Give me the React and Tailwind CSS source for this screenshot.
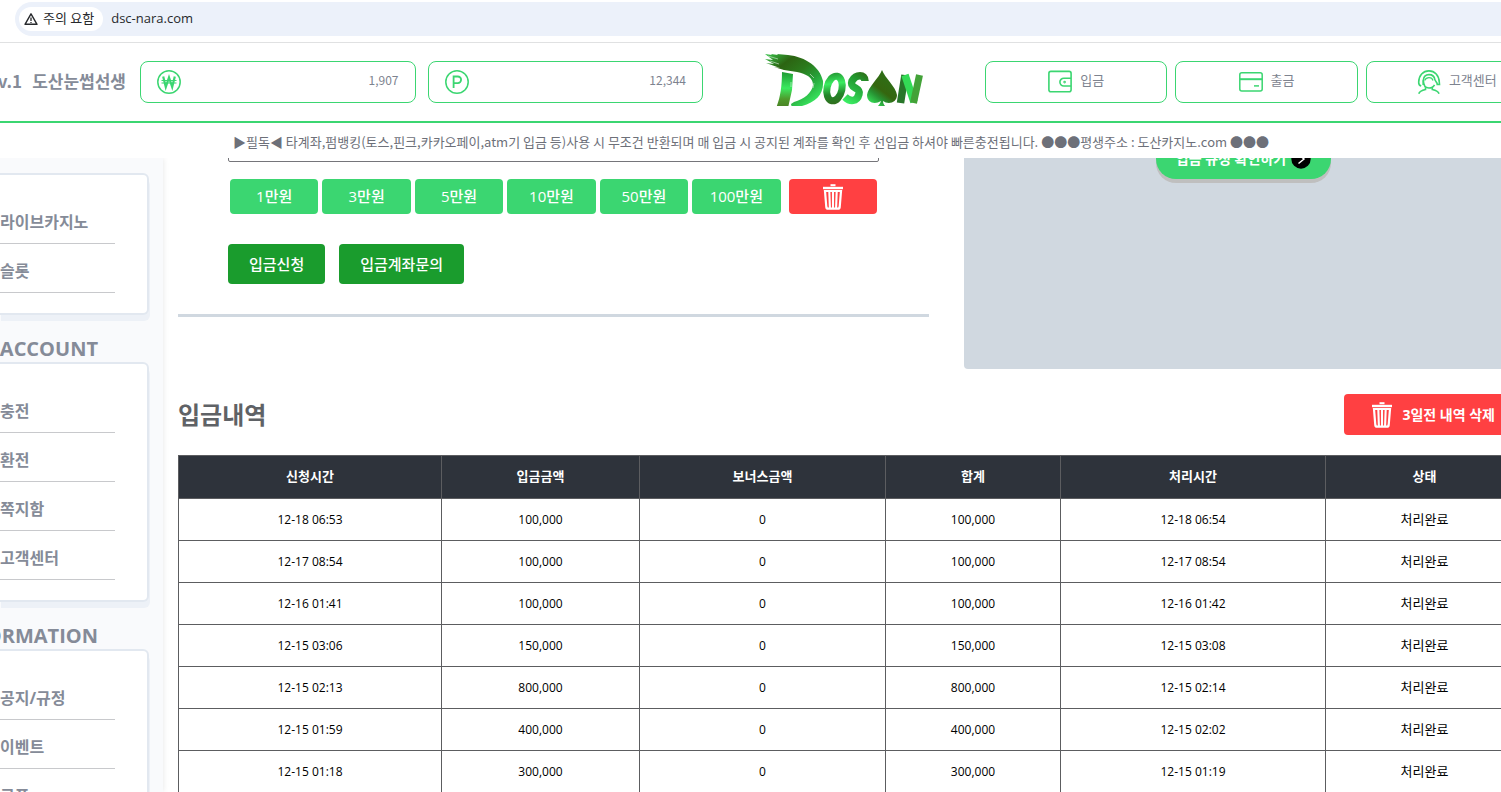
import React from 'react';

const FONT_UI = "font-['Open_Sans','Noto_Sans_CJK_KR',sans-serif]";
const FONT_KR = "font-['Noto_Sans_CJK_KR',sans-serif]";

const MENU_GROUPS = [
    { title: null, items: ['라이브카지노', '슬롯'] },
    { title: 'ACCOUNT', items: ['충전', '환전', '쪽지함', '고객센터'] },
    { title: 'ORMATION', items: ['공지/규정', '이벤트', '쿠폰'] },
];

const AMOUNTS = ['1만원', '3만원', '5만원', '10만원', '50만원', '100만원'];

const COLUMNS = [
    { label: '신청시간', width: 'w-[263px]' },
    { label: '입금금액', width: 'w-[198px]' },
    { label: '보너스금액', width: 'w-[246px]' },
    { label: '합계', width: 'w-[175px]' },
    { label: '처리시간', width: 'w-[265px]' },
    { label: '상태', width: 'w-[198px]' },
];

const DEPOSITS = [
    { requested: '12-18 06:53', amount: '100,000', processed: '12-18 06:54' },
    { requested: '12-17 08:54', amount: '100,000', processed: '12-17 08:54' },
    { requested: '12-16 01:41', amount: '100,000', processed: '12-16 01:42' },
    { requested: '12-15 03:06', amount: '150,000', processed: '12-15 03:08' },
    { requested: '12-15 02:13', amount: '800,000', processed: '12-15 02:14' },
    { requested: '12-15 01:59', amount: '400,000', processed: '12-15 02:02' },
    { requested: '12-15 01:18', amount: '300,000', processed: '12-15 01:19' },
];

const WarningIcon = () => (
    <svg width="14" height="14" viewBox="0 0 14 14" fill="none" stroke="#27292c" aria-hidden="true">
        <path d="M7 1.8 13 12.3H1Z" strokeWidth="1.4" strokeLinejoin="round" />
        <path d="M7 5.5v3.4M7 9.9v1.2" strokeWidth="1.3" />
    </svg>
);

const WonIcon = () => (
    <svg width="24" height="24" viewBox="0 0 24 24" fill="none" stroke="#3bd671" aria-hidden="true">
        <circle cx="12" cy="12" r="11.2" strokeWidth="1.5" />
        <path d="M6.2 6.5 8.8 17 12 7.5 15.2 17 17.8 6.5" strokeWidth="2.2" />
        <path d="M4.5 10.5h15M4.5 13h15" strokeWidth="1.2" />
    </svg>
);

const PointIcon = () => (
    <svg width="24" height="24" viewBox="0 0 24 24" fill="none" stroke="#3bd671" aria-hidden="true">
        <circle cx="12" cy="12" r="11.2" strokeWidth="1.5" />
        <path d="M8.6 18V6.5h4.2a3.3 3.3 0 0 1 0 6.6H8.6" strokeWidth="1.8" />
    </svg>
);

const WalletIcon = () => (
    <svg width="24" height="24" viewBox="0 0 24 24" fill="none" stroke="#3bd671" strokeWidth="1.6" aria-hidden="true">
        <rect x="0.9" y="1.4" width="22.2" height="20.4" rx="2" />
        <path d="M23 8.2h-7.2a3.9 3.9 0 0 0 0 7.8H23" />
        <circle cx="16.6" cy="12.1" r="0.5" />
    </svg>
);

const CardIcon = () => (
    <svg width="24" height="24" viewBox="0 0 24 24" fill="none" stroke="#3bd671" strokeWidth="1.5" aria-hidden="true">
        <rect x="0.8" y="2.8" width="22.4" height="18.2" rx="2" />
        <path d="M1 9.2h22" strokeWidth="2" />
        <path d="M15 15.9h5" />
    </svg>
);

const SupportIcon = () => (
    <svg width="24" height="24" viewBox="0 0 24 24" fill="none" stroke="#3bd671" strokeWidth="1.6" aria-hidden="true">
        <path d="M4.2 16C2.4 15.4 1.6 13.8 1.7 12.2 1.8 5.5 6 .9 11.9.9S22 5.5 22.3 12.2L22.5 14.5H19.5" />
        <path d="M6.2 15V10.5C6.5 6.8 8.8 4.6 12 4.6S17.5 6.8 17.9 9.8L20.5 14" />
        <path d="M7.6 10.5C8.5 8.5 10 7.6 12 7.6S15.500 8.500 16 10.500" strokeWidth="1.2" />
        <path d="M6.4 10.500C6.400 15 8.500 18 12 18 14.500 18 16.500 16.800 17.500 14.800" />
        <path d="M8.500 17.300V19.500C4.500 20.400 2.500 21 1.800 23.700M15.300 17.300V19.500C19.300 20.400 21.300 21 22 23.700" />
    </svg>
);

const TrashIcon = () => (
    <svg width="20" height="26" viewBox="0 0 20 26" fill="none" stroke="#fff" aria-hidden="true">
        <path d="M7.5 1.2h5" strokeWidth="2" />
        <path d="M0 4h20" strokeWidth="2.4" />
        <path d="M2 7h16l-1.300 16q-.2 1.700-1.800 1.700H5.100q-1.600 0-1.800-1.700Z" strokeWidth="2.200" />
        <path d="M6.300 7l.6 17M10 7v17M13.700 7l-.6 17" strokeWidth="2.100" />
    </svg>
);

const ArrowIcon = () => (
    <svg width="20" height="20" viewBox="0 0 20 20" fill="none" aria-hidden="true">
        <circle cx="10" cy="10" r="9.7" fill="#000" />
        <path d="M7.5 5.5 13 10l-5.500 4.500" stroke="#fff" strokeWidth="1.5" />
    </svg>
);

const Logo = () => (
    <svg width="160" height="52" viewBox="0 0 160 52" fill="none" role="img" aria-label="DOSAN">
        <defs>
            <linearGradient id="brush" gradientUnits="userSpaceOnUse" x1="0" y1="0" x2="44" y2="56">
                <stop offset="0" stopColor="#37c94c" />
                <stop offset=".28" stopColor="#2c6412" />
                <stop offset=".5" stopColor="#2b7a1c" />
                <stop offset=".7" stopColor="#25a038" />
                <stop offset="1" stopColor="#3cf065" />
            </linearGradient>
            <linearGradient id="stem" x1="0" y1="0" x2="0" y2="1">
                <stop offset="0" stopColor="#1f9a33" />
                <stop offset=".45" stopColor="#3bea60" />
                <stop offset=".75" stopColor="#4f9a2c" />
                <stop offset="1" stopColor="#4a7f24" />
            </linearGradient>
            <linearGradient id="ring" gradientUnits="userSpaceOnUse" x1="64" y1="18" x2="76" y2="52">
                <stop offset="0" stopColor="#218a2c" />
                <stop offset=".35" stopColor="#3aec60" />
                <stop offset=".65" stopColor="#23852a" />
                <stop offset="1" stopColor="#34691a" />
            </linearGradient>
            <linearGradient id="curl" gradientUnits="userSpaceOnUse" x1="102" y1="18" x2="82" y2="50">
                <stop offset="0" stopColor="#2f6c16" />
                <stop offset=".3" stopColor="#219a30" />
                <stop offset=".6" stopColor="#2cb945" />
                <stop offset="1" stopColor="#3df568" />
            </linearGradient>
            <linearGradient id="spade" gradientUnits="userSpaceOnUse" x1="106" y1="50" x2="128" y2="22">
                <stop offset="0" stopColor="#38e65b" />
                <stop offset=".3" stopColor="#279232" />
                <stop offset=".5" stopColor="#35660f" />
                <stop offset="1" stopColor="#2d7018" />
            </linearGradient>
        </defs>
        {/* Brush stroke of the first letter */}
        <path
            fill="url(#brush)"
            d="M1 0 8 1 7 0 14 1 13 0 24 1C42 3 56 13 59 27 60 40 52 48 38 52L28 54 27 50 30 48C40 45 48 39 49 31 49 23 42 20 33 18L20 16 10 13 16 14 2 9 10 10 1 5 9 6Z"
        />
        <path fill="url(#stem)" d="M18 18 29 20 28 36 24 54H12C16 45 18 33 18 18Z" />
        <path d="M4 2l10 3M6 7l9 3M46 20l4 4M50 29l-1 5M27 28v5" stroke="#fff" strokeWidth=".5" />
        <ellipse cx="70.500" cy="34.500" rx="7.500" ry="12.500" transform="rotate(12 70.500 34.500)" stroke="url(#ring)" strokeWidth="7" />
        <path d="M101 27C101 20 92 20 88 27 85 35 97 33 95 40 93 48 86 48 81 43" stroke="url(#curl)" strokeWidth="7.500" />
        <path
            fill="url(#spade)"
            d="M118 16C121 24 132 33 133 41 133 49 124 51 119 47 119 50 121 52 123 54H112C114 52 116 50 117 47 111 51 103 49 103 41 104 33 115 24 118 16Z"
        />
        <path d="M136.500 49 141 21" stroke="#28762a" strokeWidth="7.500" />
        <path d="M141 21 150 48" stroke="#33da55" strokeWidth="7.500" />
        <path d="M149.500 49 155.500 21" stroke="#43a238" strokeWidth="7" />
    </svg>
);

const BalanceBox = ({ icon: Icon, label, value }) => (
    <div className="flex h-[42px] flex-1 items-center justify-between rounded-lg border border-[#3bd671] px-4">
        <Icon />
        <span aria-label={label} className="pb-1 text-xs leading-4 text-[#7d838f]">{value}</span>
    </div>
);

const NavButton = ({ icon: Icon, children }) => (
    <button type="button" className="flex h-[42px] flex-1 items-center justify-center gap-2 rounded-lg border border-[#3bd671] text-[13px] text-[#7d838f]">
        <Icon />
        <span className="pb-1">{children}</span>
    </button>
);

const AddressBar = () => (
    <div className="shrink-0 border-b border-[#e0e1e2] bg-white pt-0.5 pb-1.5 pl-[15px]">
        <div className="flex h-[34px] items-center gap-2 rounded-l-full bg-[#ecf1fa] pl-1 text-[#27292c]">
            <button type="button" className="flex h-6 items-center gap-[5px] rounded-full bg-white pr-[9px] pl-[5px] text-[13px]">
                <WarningIcon />
                주의 요함
            </button>
            <span className="text-[13px]">dsc-nara.com</span>
        </div>
    </div>
);

const Header = () => (
    <header className="shrink-0 overflow-hidden border-b-2 border-[#3bd671] bg-white">
        <div className={`-mr-[47px] flex items-center py-[18px] ${FONT_KR}`}>
            <div className="flex w-[126px] shrink-0 justify-end gap-2.5 pb-0.5 text-[17px] font-bold whitespace-nowrap text-[#858b98]">
                <span>v.1</span>
                <span>도산눈썹선생</span>
            </div>
            <div className="ml-3.5 flex flex-1 gap-3">
                <BalanceBox icon={WonIcon} label="보유머니" value="1,907" />
                <BalanceBox icon={PointIcon} label="포인트" value="12,344" />
            </div>
            <a href="#home" className="flex h-[42px] w-[282px] shrink-0 items-center justify-center pb-1">
                <Logo />
            </a>
            <nav className="flex flex-1 gap-2">
                <NavButton icon={WalletIcon}>입금</NavButton>
                <NavButton icon={CardIcon}>출금</NavButton>
                <NavButton icon={SupportIcon}>고객센터</NavButton>
            </nav>
        </div>
    </header>
);

const Notice = () => (
    <div className={`flex h-[35px] shrink-0 items-center overflow-hidden bg-white pt-0.5 pl-[233px] text-[13px] whitespace-pre text-[#6d7079] ${FONT_KR}`}>
        ▶필독◀ 타계좌,펌뱅킹(토스,핀크,카카오페이,atm기 입금 등)사용 시 무조건 반환되며 매 입금 시 공지된 계좌를 확인 후 선입금 하셔야 빠른충전됩니다. ●●●평생주소 : 도산카지노.com ●●●
    </div>
);

const Sidebar = () => (
    <aside className="w-[163px] shrink-0 bg-[#f9fafc] pt-[15px] shadow-[0_0_6px_rgba(0,0,0,0.1)]">
        {MENU_GROUPS.map(({ title, items }) => (
            <section key={items[0]}>
                {title && (
                    <h2 className="mt-5 flex h-[27px] w-[98px] items-center justify-end text-xl font-bold whitespace-nowrap text-[#858b98]">
                        {title}
                    </h2>
                )}
                <ul className="mr-3.5 rounded-r-md border-2 border-l-0 border-[#e2e8f0] bg-white py-5 pr-8 shadow-[1px_6px_0_#edf1f7]">
                    {items.map((item) => (
                        <li key={item} className="border-b border-[#c8c9cc]">
                            <a href="#menu" className="flex h-12 items-center pt-1.5 text-base font-bold text-[#858b98]">
                                {item}
                            </a>
                        </li>
                    ))}
                </ul>
            </section>
        ))}
    </aside>
);

const DepositForm = () => (
    <form className="w-[751px] shrink-0 self-start border-b-[3px] border-[#d0d8e0] px-[50px] pb-[30px]">
        <input
            type="text"
            aria-label="입금금액"
            className="block h-10 w-full rounded-xs border border-[#75757a] px-3 text-sm"
        />
        <div className="mt-[17px] flex gap-1 px-0.5">
            {AMOUNTS.map((amount) => (
                <button key={amount} type="button" className="h-[35px] flex-1 rounded bg-[#3bd671] text-[15px] font-medium text-white">
                    {amount}
                </button>
            ))}
            <button type="button" aria-label="금액 지우기" className="ml-1 flex h-[35px] flex-1 items-center justify-center rounded bg-[#ff4042]">
                <TrashIcon />
            </button>
        </div>
        <div className="mt-[30px] flex gap-3.5">
            <button type="submit" className="h-10 rounded bg-[#1a9c2d] px-[21px] text-[15px] font-medium text-white">입금신청</button>
            <button type="button" className="h-10 rounded bg-[#1a9c2d] px-[21px] text-[15px] font-medium text-white">입금계좌문의</button>
        </div>
    </form>
);

const RulesPanel = () => (
    <div className="flex h-[247px] flex-1 items-start justify-center rounded bg-[#d0d8e0] pt-[17px]">
        <button type="button" className="flex h-10 items-center gap-[5px] rounded-[20px] bg-[#3bd671] px-5 text-sm font-bold text-white shadow-[0_4px_0_#bfbfbf]">
            입금 규정 확인하기
            <ArrowIcon />
        </button>
    </div>
);

const DepositTable = () => (
    <table className="mt-5 w-full table-fixed border-collapse text-center">
        <thead>
            <tr className="h-[43px] bg-[#2e333b] text-[13px] text-white">
                {COLUMNS.map(({ label, width }) => (
                    <th key={label} className={`border border-[#5c5d60] font-bold ${width}`}>{label}</th>
                ))}
            </tr>
        </thead>
        <tbody>
            {DEPOSITS.map(({ requested, amount, processed }) => (
                <tr key={requested} className="h-[42px] text-xs text-black">
                    <td className="border border-[#5c5d60]">{requested}</td>
                    <td className="border border-[#5c5d60]">{amount}</td>
                    <td className="border border-[#5c5d60]">0</td>
                    <td className="border border-[#5c5d60]">{amount}</td>
                    <td className="border border-[#5c5d60]">{processed}</td>
                    <td className="border border-[#5c5d60] text-[13px]">처리완료</td>
                </tr>
            ))}
        </tbody>
    </table>
);

export default function App() {
    return (
        <div className={`flex h-screen flex-col overflow-hidden bg-white ${FONT_UI}`}>
            <AddressBar />
            <Header />
            <Notice />
            <div className="flex min-h-0 flex-1 overflow-hidden">
                <Sidebar />
                <main className="-mt-9 -mr-[22px] min-w-0 flex-1 pl-[15px]">
                    <div className="flex gap-[35px]">
                        <DepositForm />
                        <RulesPanel />
                    </div>
                    <div className="mt-[25px] flex items-center justify-between">
                        <h1 className="text-2xl font-bold text-[#5f6266]">입금내역</h1>
                        <button type="button" className="flex h-[41px] items-center gap-2.5 rounded bg-[#ff4042] px-7 text-sm font-bold text-white">
                            <TrashIcon />
                            3일전 내역 삭제
                        </button>
                    </div>
                    <DepositTable />
                </main>
            </div>
        </div>
    );
}
